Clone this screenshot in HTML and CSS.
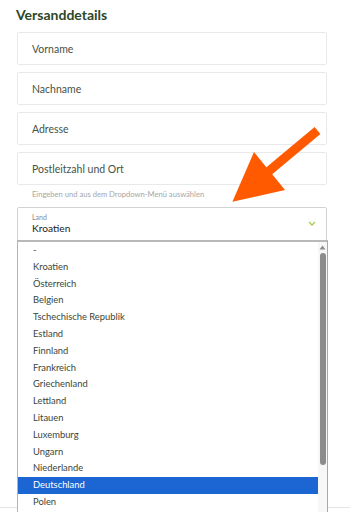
FILE: index.html
```html
<!DOCTYPE html>
<html lang="de">
<head>
<meta charset="utf-8">
<title>Versanddetails</title>
<link rel="stylesheet" href="styles.css">
</head>
<body>
<main class="page">
  <h2 class="title">Versanddetails</h2>
  <div class="fields">
    <div class="field">Vorname</div>
    <div class="field">Nachname</div>
    <div class="field">Adresse</div>
    <div class="field">Postleitzahl und Ort</div>
  </div>
  <p class="hint">Eingeben und aus dem Dropdown-Menü auswählen</p>
  <div class="select">
    <div class="select-text">
      <span class="select-label">Land</span>
      <span class="select-value">Kroatien</span>
    </div>
    <svg class="chevron" width="8" height="5" viewBox="0 0 8 5"><path d="M1 1 L4 4 L7 1" fill="none" stroke="#a5cf4a" stroke-width="1.3"/></svg>
  </div>
  <div class="divider"></div>

  <div class="listbox">
    <ul class="options">
      <li>-</li>
      <li>Kroatien</li>
      <li>Österreich</li>
      <li>Belgien</li>
      <li>Tschechische Republik</li>
      <li>Estland</li>
      <li>Finnland</li>
      <li>Frankreich</li>
      <li>Griechenland</li>
      <li>Lettland</li>
      <li>Litauen</li>
      <li>Luxemburg</li>
      <li>Ungarn</li>
      <li>Niederlande</li>
      <li class="selected">Deutschland</li>
      <li>Polen</li>
    </ul>
    <div class="scrollbar">
      <svg class="scroll-up" width="7" height="5" viewBox="0 0 7 5"><path d="M0.5 4.5 L3.5 0.5 L6.5 4.5 Z" fill="#8c8c8c"/></svg>
      <div class="thumb"></div>
    </div>
  </div>

  <svg class="arrow" width="350" height="512" viewBox="0 0 350 512">
    <polygon points="314.6,127 320.4,134 272.2,174.3 285,190 232.4,201.7 254,152 266.4,167.3" fill="#ff5a00"/>
  </svg>
</main>
</body>
</html>
```

FILE: styles.css
```css
* { box-sizing: border-box; }
html, body {
  margin: 0;
  padding: 0;
  background: #ffffff;
}
body {
  font-family: Lato, "Open Sans", sans-serif;
  width: 350px;
  height: 512px;
  overflow: hidden;
}
.page {
  position: relative;
  padding: 7px 23px 0 17px;
  height: 512px;
}
.title {
  margin: 0 0 0 -1px;
  font-size: 14px;
  line-height: 16px;
  font-weight: 700;
  color: #2d4628;
}
.fields {
  display: flex;
  flex-direction: column;
  gap: 7px;
  margin-top: 9px;
}
.field {
  height: 33px;
  border: 1px solid #e9e9e9;
  border-radius: 2px;
  display: flex;
  align-items: center;
  padding-left: 14px;
  font-size: 10.5px;
  color: #465246;
}
.hint {
  margin: 3px 0 0 0;
  padding-left: 15px;
  font-size: 7.6px;
  line-height: 12px;
  color: #a6a6a6;
}
.select {
  margin-top: 7px;
  height: 34px;
  border: 1px solid #d2d2d2;
  border-radius: 2px 2px 0 0;
  display: flex;
  align-items: center;
  justify-content: space-between;
  padding: 0 10px 0 14px;
}
.select-text {
  display: flex;
  flex-direction: column;
}
.select-label {
  font-size: 7px;
  line-height: 9px;
  color: #8a8a8a;
}
.select-value {
  font-size: 10.2px;
  line-height: 13px;
  color: #222222;
}
.chevron { margin-bottom: 2px; }
.divider {
  margin: 266px -23px 0 -17px;
  height: 1px;
  background: #e4e4e4;
}
.listbox {
  position: absolute;
  left: 17px;
  top: 240px;
  width: 311px;
  height: 290px;
  background: #ffffff;
  border-top: 2px solid #b9b9b9;
  border-left: 1px solid #b4b4b4;
  border-right: 1px solid #a8a8a8;
  display: flex;
}
.options {
  list-style: none;
  margin: 0;
  padding: 0;
  flex: 1;
}
.options li {
  height: 16.8px;
  line-height: 16.8px;
  padding-left: 15px;
  font-size: 9.4px;
  color: #3a463a;
}
.options li.selected {
  background: #1c66d4;
  color: #ffffff;
}
.scrollbar {
  width: 9px;
  background: #f7f7f7;
  display: flex;
  flex-direction: column;
  align-items: center;
  padding-top: 3px;
}
.scroll-up { display: block; }
.thumb {
  margin-top: 3px;
  width: 6px;
  height: 212px;
  border-radius: 3px;
  background: #8c8c8c;
}
.arrow {
  position: absolute;
  left: 0;
  top: 0;
  pointer-events: none;
}
```
